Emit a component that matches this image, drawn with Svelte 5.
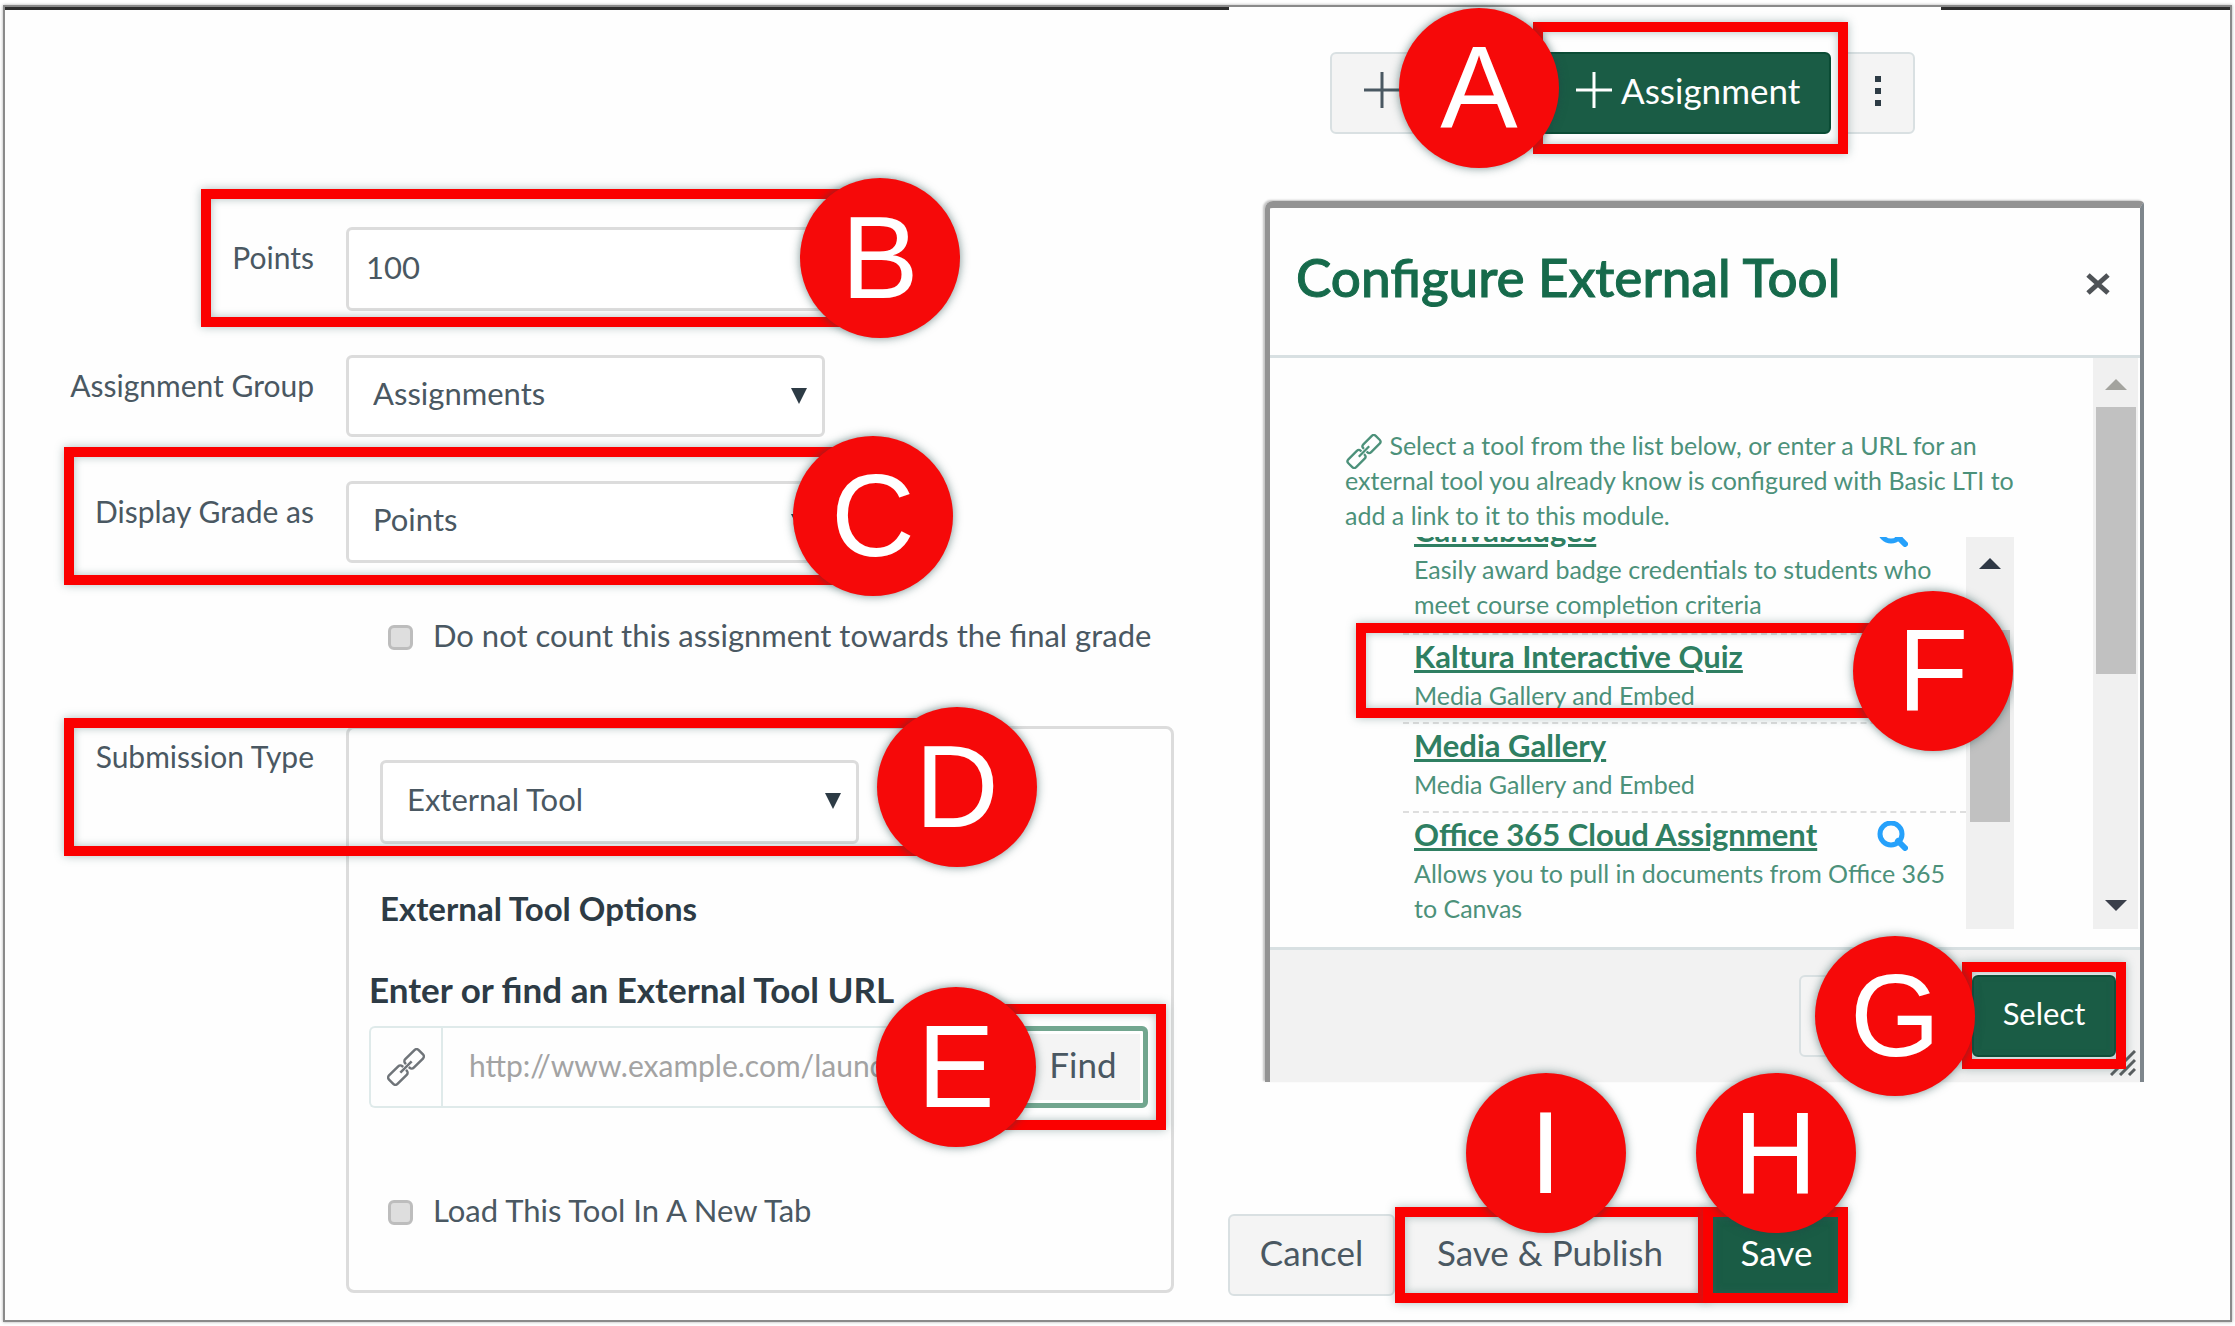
<script>
	let points = '100';
	let group = 'Assignments';
	let gradeType = 'Points';
	let submissionType = 'External Tool';
	let toolUrl = '';
	let omitFromFinal = false;
	let newTab = false;

	const tools = [
		{
			id: 'canvabadges',
			name: 'Canvabadges',
			text: 'Easily award badge credentials to students who meet course completion criteria',
			search: true
		},
		{ id: 'kaltura', name: 'Kaltura Interactive Quiz', text: 'Media Gallery and Embed', marked: true },
		{ id: 'media', name: 'Media Gallery', text: 'Media Gallery and Embed' },
		{
			id: 'office',
			name: 'Office 365 Cloud Assignment',
			text: 'Allows you to pull in documents from Office 365 to Canvas',
			search: true
		}
	];
</script>

{#snippet linkIcon()}
	<svg class="link-icon" viewBox="0 0 38 38" aria-hidden="true">
		<g transform="translate(19 19) rotate(-45)" fill="none" stroke="currentColor" stroke-width="2.5">
			<path d="M-5 -6H-18a3 3 0 0 0 -3 3V3a3 3 0 0 0 3 3H-5a3 3 0 0 0 3 -3V2M-2 -2V-3a3 3 0 0 0 -3 -3" />
			<path d="M5 6H18a3 3 0 0 0 3 -3V-3a3 3 0 0 0 -3 -3H5a3 3 0 0 0 -3 3V-2M2 2V3a3 3 0 0 0 3 3" />
			<path d="M-8 0H8" />
		</g>
	</svg>
{/snippet}

{#snippet plusIcon()}
	<svg class="plus" viewBox="0 0 36 36" aria-hidden="true">
		<path d="M18 0V36M0 18H36" stroke="currentColor" stroke-width="3" />
	</svg>
{/snippet}

<div class="page">
	<form class="settings">
		<div class="row">
			<label for="points">Points</label>
			<input id="points" class="field tall" type="text" bind:value={points} />
			<div class="mark mark-b"><span class="badge end">B</span></div>
		</div>

		<div class="row">
			<label for="group">Assignment Group</label>
			<div class="select">
				<select id="group" class="field" bind:value={group}>
					<option>Assignments</option>
				</select>
			</div>
		</div>

		<div class="row">
			<label for="grade">Display Grade as</label>
			<div class="select">
				<select id="grade" class="field" bind:value={gradeType}>
					<option>Points</option>
				</select>
			</div>
			<div class="mark mark-c"><span class="badge end">C</span></div>
		</div>

		<label class="check final">
			<input type="checkbox" bind:checked={omitFromFinal} />
			Do not count this assignment towards the final grade
		</label>

		<div class="row submission">
			<label for="submission">Submission Type</label>
			<div class="panel">
				<div class="select">
					<select id="submission" class="field" bind:value={submissionType}>
						<option>External Tool</option>
					</select>
				</div>
				<h3>External Tool Options</h3>
				<label class="url-label" for="url">Enter or find an External Tool URL</label>
				<div class="url">
					<span class="addon">{@render linkIcon()}</span>
					<input id="url" type="text" placeholder="http://www.example.com/launch" bind:value={toolUrl} />
					<div class="holder">
						<button type="button" class="find">Find</button>
						<div class="mark mark-e"><span class="badge start">E</span></div>
					</div>
				</div>
				<label class="check">
					<input type="checkbox" bind:checked={newTab} />
					Load This Tool In A New Tab
				</label>
			</div>
			<div class="mark mark-d"><span class="badge end">D</span></div>
		</div>
	</form>

	<div class="side">
		<div class="toolbar">
			<button type="button" class="btn add-group" aria-label="Add group">{@render plusIcon()}</button>
			<div class="holder">
				<button type="button" class="btn primary add">{@render plusIcon()}Assignment</button>
				<div class="mark mark-a"><span class="badge start">A</span></div>
			</div>
			<button type="button" class="btn more" aria-label="More options">
				<svg viewBox="0 0 6 32" aria-hidden="true">
					<path d="M0 1h6v6H0zM0 13h6v6H0zM0 25h6v6H0z" fill="#2d3b45" />
				</svg>
			</button>
		</div>

		<section class="dialog">
			<header>
				<h2>Configure External Tool</h2>
				<button type="button" class="close" aria-label="Close">
					<svg viewBox="0 0 24 22" aria-hidden="true">
						<path d="M2 2L22 20M22 2L2 20" stroke="#4f5357" stroke-width="5" />
					</svg>
				</button>
			</header>

			<div class="body">
				<div class="content">
					<p>
						{@render linkIcon()} Select a tool from the list below, or enter a URL for an external tool you
						already know is configured with Basic LTI to add a link to it to this module.
					</p>
					<div class="tools">
						<ul>
							{#each tools as tool}
								<li>
									<a href="#{tool.id}">{tool.name}</a>
									<span class="text">{tool.text}</span>
									{#if tool.search}
										<svg class="search" viewBox="0 0 31 30" aria-hidden="true">
											<circle cx="14" cy="13" r="11" fill="none" stroke="#26a1fb" stroke-width="5" />
											<path d="M21 20L28 27" stroke="#26a1fb" stroke-width="6" stroke-linecap="round" />
										</svg>
									{/if}
									{#if tool.marked}
										<div class="mark mark-f"><span class="badge end">F</span></div>
									{/if}
								</li>
							{/each}
						</ul>
						<div class="scroll inner">
							<svg viewBox="0 0 22 11" aria-hidden="true"><path d="M0 11L11 0L22 11Z" fill="#2f3845" /></svg>
							<div class="thumb"></div>
						</div>
					</div>
				</div>
				<div class="scroll outer">
					<svg viewBox="0 0 22 11" aria-hidden="true"><path d="M0 11L11 0L22 11Z" fill="#a3a39e" /></svg>
					<div class="thumb"></div>
					<svg class="down" viewBox="0 0 22 11" aria-hidden="true"><path d="M0 0L11 11L22 0Z" fill="#3a3f4a" /></svg>
				</div>
			</div>

			<footer>
				<button type="button" class="btn dismiss" aria-label="Cancel"></button>
				<div class="holder">
					<button type="button" class="btn primary choose">Select</button>
					<div class="mark mark-g"><span class="badge start">G</span></div>
				</div>
				<svg class="grip" viewBox="0 0 26 26" aria-hidden="true">
					<path d="M1 25L25 1M10 25L25 10M19 25L25 19" stroke="#5a5e60" stroke-width="3" />
				</svg>
			</footer>
		</section>

		<div class="actions">
			<button type="button" class="btn cancel">Cancel</button>
			<div class="holder">
				<button type="button" class="btn publish">Save &amp; Publish</button>
				<div class="mark mark-i"><span class="badge top">I</span></div>
			</div>
			<div class="holder">
				<button type="button" class="btn primary save">Save</button>
				<div class="mark mark-h"><span class="badge top">H</span></div>
			</div>
		</div>
	</div>
</div>

<style>
	:global(body) {
		background: #fff;
	}
	.page,
	.page * {
		box-sizing: border-box;
	}
	.page {
		display: grid;
		grid-template-columns: 1169fr 1002fr;
		gap: 54px;
		min-height: calc(100vh - 9px);
		margin: 5px 3px 4px;
		padding-top: 2px;
		border: 2px solid #8a8a8a;
		box-shadow: 0 0 3px #aaa;
		background:
			linear-gradient(to right, #2d2d2d 55%, transparent 55%, transparent 87%, #2d2d2d 87%) top / 100% 3px no-repeat,
			#fefefe;
		color: #4a5862;
		font: 31px/36px Lato, sans-serif;
	}
	button,
	input,
	select {
		font: inherit;
		color: inherit;
	}
	button {
		padding: 0;
		cursor: pointer;
	}
	h2,
	h3,
	p,
	ul {
		margin: 0;
		padding: 0;
	}

	/* assignment form */
	.settings {
		display: flex;
		flex-direction: column;
		gap: 44px;
		padding-top: 218px;
	}
	.row {
		position: relative;
		display: grid;
		grid-template-columns: 309px 1fr;
		column-gap: 32px;
	}
	.row > label {
		padding-top: 12px;
		font-size: 30px;
		text-align: right;
	}
	.field {
		display: block;
		width: 479px;
		height: 82px;
		padding: 0 24px 6px;
		border: 3px solid #dcdcdc;
		border-radius: 6px;
		background: #fff;
		appearance: none;
	}
	.tall {
		height: 84px;
		padding: 0 17px 4px;
	}
	.select {
		position: relative;
		width: 479px;
	}
	.select::after {
		content: '';
		position: absolute;
		top: 33px;
		right: 18px;
		border: 8px solid transparent;
		border-top: 16px solid #2d3b45;
		border-bottom: 0;
		pointer-events: none;
	}
	.check {
		display: flex;
		align-items: center;
		gap: 20px;
		line-height: 40px;
	}
	.check input {
		appearance: none;
		width: 25px;
		height: 25px;
		margin: 4px 0 0;
		border: 3px solid #bdbdbd;
		border-radius: 6px;
		background: #dedede;
	}
	.final {
		margin: 8px 0 27px 383px;
	}
	.panel {
		padding: 31px 23px 60px 20px;
		border: 3px solid #dcdcdc;
		border-radius: 8px;
	}
	.panel .select {
		margin-left: 11px;
	}
	.panel .field {
		height: 84px;
	}
	h3 {
		margin: 46px 11px 43px;
		font-size: 33px;
		line-height: 36px;
		font-weight: 700;
		color: #2d3b45;
	}
	.url-label {
		font-size: 35px;
		line-height: 40px;
		font-weight: 700;
		color: #2d3b45;
	}
	.url {
		display: flex;
		height: 82px;
		margin: 17px 0 82px;
		border: 2px solid #dfeaea;
		border-right: 0;
		border-radius: 6px;
	}
	.addon {
		display: flex;
		align-items: center;
		justify-content: center;
		width: 72px;
		border-right: 2px solid #dfeaea;
		color: #6f7479;
	}
	.url input {
		flex: 1;
		min-width: 0;
		padding: 0 26px 4px;
		border: 0;
		background: none;
		font-size: 30px;
	}
	.url input::placeholder {
		color: #a3a3a3;
	}
	.find {
		width: 130px;
		height: 82px;
		margin: -2px 0;
		padding: 0 0 6px;
		border: 5px solid #72a68f;
		border-radius: 6px;
		background: #f4f4f4;
		box-shadow: inset 0 0 0 3px #fff;
		font-size: 35px;
	}
	.panel .check {
		margin-left: 19px;
	}
	.link-icon {
		width: 38px;
		height: 38px;
	}

	/* buttons */
	.holder {
		position: relative;
	}
	.btn {
		height: 82px;
		padding: 0 0 6px;
		border: 2px solid #d9e0e2;
		border-radius: 6px;
		background: #f4f4f4;
		font-size: 35px;
	}
	.primary {
		border-color: #0b4c35;
		background: #1a5c45;
		color: #fff;
	}
	.toolbar {
		display: flex;
		margin: 43px 0 67px 102px;
	}
	.toolbar .btn {
		display: flex;
		align-items: center;
	}
	.toolbar .add-group {
		width: 190px;
		margin-right: 20px;
		padding-left: 32px;
	}
	.toolbar .add {
		gap: 9px;
		width: 291px;
		padding-left: 34px;
	}
	.toolbar .more {
		justify-content: center;
		width: 75px;
		margin-left: 9px;
		padding-bottom: 4px;
	}
	.plus {
		flex: none;
		width: 36px;
		height: 36px;
	}
	.more svg {
		width: 6px;
		height: 32px;
	}

	/* external tool dialog */
	.dialog {
		margin: 0 86px 0 37px;
		border: solid #939393;
		border-width: 7px 4px 0 5px;
		border-right-color: #7e868c;
		border-radius: 8px 4px 0 0;
		box-shadow: -2px -1px 2px #c4c4c4;
	}
	.dialog header {
		display: flex;
		align-items: center;
		justify-content: space-between;
		height: 150px;
		padding: 0 30px 10px 26px;
		border-bottom: 3px solid #d8e0e2;
	}
	h2 {
		font-size: 53px;
		line-height: 64px;
		font-weight: 500;
		color: #166a4b;
		-webkit-text-stroke: 1px #166a4b;
	}
	.close {
		width: 24px;
		height: 22px;
		margin-top: 14px;
		border: 0;
		background: none;
	}
	.close svg {
		display: block;
	}
	.body {
		display: flex;
		justify-content: space-between;
		height: 589px;
		padding: 0 2px 18px 0;
	}
	.content {
		width: 690px;
		margin-left: 75px;
		padding-top: 70px;
		font-size: 25px;
		line-height: 35px;
		color: #4c917a;
	}
	p .link-icon {
		height: 35px;
		vertical-align: bottom;
		margin-bottom: -6px;
	}
	.tools {
		display: flex;
		height: 392px;
		margin: 4px 21px 0 58px;
		clip-path: inset(0 0 0 -60px);
	}
	.tools ul {
		flex: 1;
		margin-top: -28px;
		list-style: none;
	}
	li {
		position: relative;
		padding: 0 8px 9px 11px;
		border-bottom: 2px dashed #dedede;
	}
	li:first-child {
		padding-bottom: 11px;
	}
	li:last-child {
		border-bottom: 0;
	}
	li a {
		display: block;
		font-size: 31px;
		line-height: 43px;
		font-weight: 700;
		color: #2f7f62;
		text-decoration-thickness: 3px;
	}
	.text {
		display: block;
	}
	.search {
		position: absolute;
		top: 8px;
		right: 58px;
		width: 31px;
		height: 30px;
	}
	.scroll {
		display: flex;
		flex-direction: column;
		align-items: center;
		flex: none;
		background: #f0f0f0;
	}
	.scroll svg {
		width: 22px;
		height: 11px;
		margin-top: 21px;
	}
	.thumb {
		width: 40px;
		background: #c1c1c1;
	}
	.inner {
		width: 48px;
	}
	.inner .thumb {
		height: 192px;
		margin-top: 61px;
	}
	.outer {
		width: 45px;
	}
	.outer .thumb {
		height: 267px;
		margin-top: 17px;
	}
	.scroll .down {
		margin: auto 0 18px;
	}
	.dialog footer {
		position: relative;
		display: flex;
		align-items: flex-start;
		justify-content: flex-end;
		height: 135px;
		padding: 25px 24px 0 0;
		border-top: 3px solid #d8e0e2;
		background: #f2f2f2;
	}
	.dismiss {
		width: 160px;
		margin-right: 13px;
	}
	.choose {
		width: 144px;
		font-size: 31px;
	}
	.grip {
		position: absolute;
		right: 4px;
		bottom: 6px;
		width: 26px;
		height: 26px;
	}

	.actions {
		display: flex;
		margin-top: 132px;
	}
	.cancel {
		width: 167px;
	}
	.publish {
		width: 310px;
	}
	.save {
		width: 143px;
	}

	/* step markers */
	.mark {
		position: absolute;
		z-index: 1;
		border: 10px solid #fb0000;
		box-shadow:
			0 0 9px rgba(60, 100, 100, 0.4),
			inset 0 0 9px rgba(60, 100, 100, 0.4);
		pointer-events: none;
	}
	.badge {
		position: absolute;
		display: flex;
		align-items: center;
		justify-content: center;
		width: 160px;
		height: 160px;
		border-radius: 50%;
		background: #f60909;
		box-shadow: 0 0 10px rgba(30, 70, 70, 0.6);
		color: #fff;
		font: 116px/160px 'Liberation Sans', Arial, sans-serif;
	}
	.end,
	.start {
		top: calc(50% - 80px);
	}
	.end {
		right: -90px;
	}
	.start {
		left: -144px;
	}
	.top {
		left: calc(50% - 80px);
		bottom: calc(100% - 16px);
	}
	.mark-a {
		inset: -30px -17px -20px -7px;
	}
	.mark-b {
		top: -38px;
		left: 196px;
		width: 679px;
		height: 138px;
	}
	.mark-c {
		top: -34px;
		left: 59px;
		width: 809px;
		height: 138px;
	}
	.mark-d {
		top: -8px;
		left: 59px;
		width: 893px;
		height: 138px;
	}
	.mark-e {
		inset: -24px -18px -24px -40px;
	}
	.mark-e .start {
		left: -112px;
	}
	.mark-f {
		top: -12px;
		left: -47px;
		width: 577px;
		height: 95px;
	}
	.mark-g {
		inset: -13px -10px -12px -10px;
	}
	.mark-g .start {
		left: -157px;
	}
	.mark-i {
		inset: -7px -3px -7px 0;
	}
	.mark-i .top {
		left: calc(50% - 86px);
	}
	.mark-h {
		inset: -7px 0 -7px -2px;
	}
</style>
